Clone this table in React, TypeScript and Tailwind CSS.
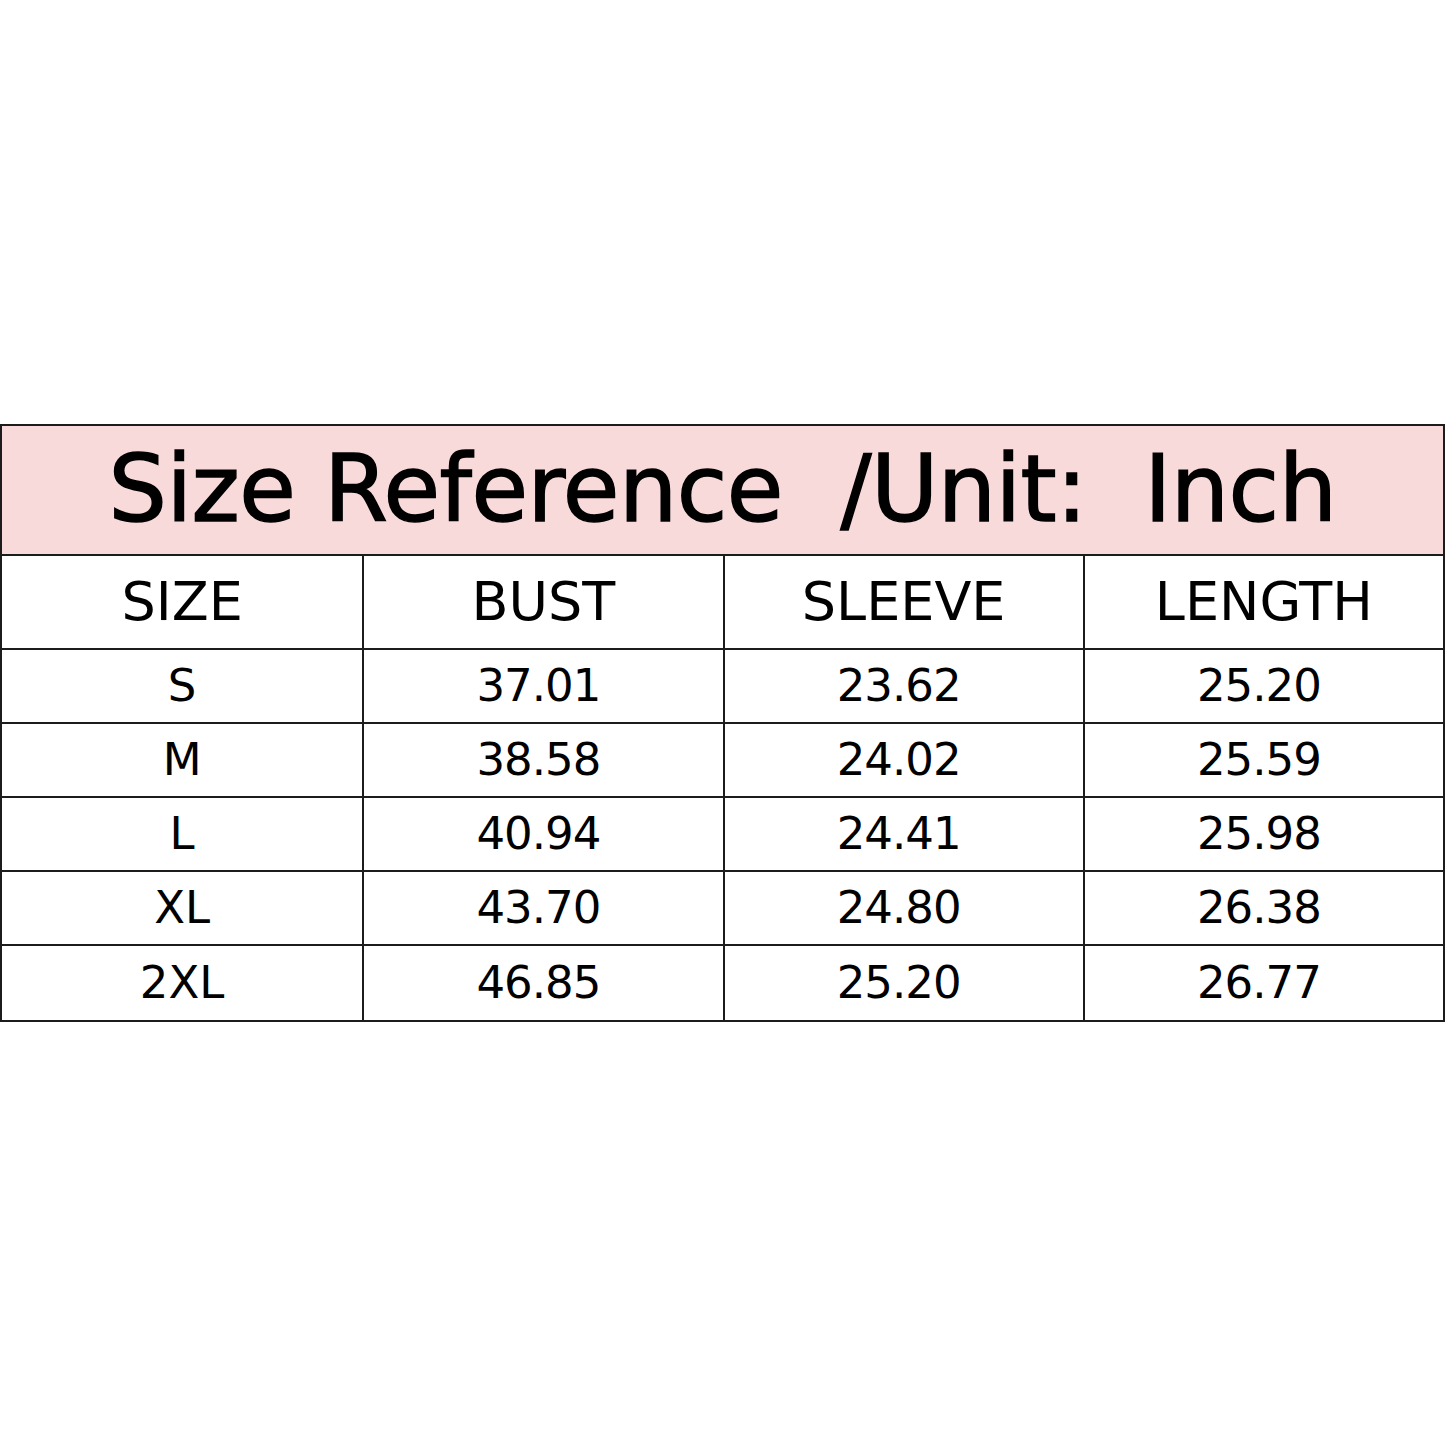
const HEADERS = ["SIZE", "BUST", "SLEEVE", "LENGTH"]

const ROWS = [
  ["S", "37.01", "23.62", "25.20"],
  ["M", "38.58", "24.02", "25.59"],
  ["L", "40.94", "24.41", "25.98"],
  ["XL", "43.70", "24.80", "26.38"],
  ["2XL", "46.85", "25.20", "26.77"],
]

const FONT = "font-['DejaVu_Sans',sans-serif]"

export default function App() {
  return (
    <div className={`flex h-[1445px] w-[1445px] items-center bg-white text-black ${FONT}`}>
      <div className="w-full border-2 border-[#1c1c1c]">
        {/* title */}
        <div className="flex h-[130px] items-center justify-center border-b-2 border-[#1c1c1c] bg-[#f9dadb]">
          <span className="whitespace-pre text-[92px] leading-none tracking-[-0.5px] [-webkit-text-stroke:1.5px_black]">
            Size Reference  /Unit:  Inch
          </span>
        </div>

        {/* header */}
        <div className="grid h-[94px] grid-cols-4 border-b-2 border-[#1c1c1c]">
          {HEADERS.map((h, i) => (
            <div
              key={h}
              className={`flex items-center justify-center text-[54px] leading-none ${i > 0 ? "border-l-2 border-[#1c1c1c]" : ""}`}
            >
              {h}
            </div>
          ))}
        </div>

        {ROWS.map((row, r) => (
          <div
            key={row[0]}
            className={`grid h-[74px] grid-cols-4 ${r < ROWS.length - 1 ? "border-b-2 border-[#1c1c1c]" : ""}`}
          >
            {row.map((cell, i) => (
              <div
                key={i}
                className={`flex items-center justify-center text-[45px] leading-none ${i > 0 ? "border-l-2 border-[#1c1c1c] pr-[10px] tracking-[-1px]" : ""}`}
              >
                {cell}
              </div>
            ))}
          </div>
        ))}
      </div>
    </div>
  )
}
